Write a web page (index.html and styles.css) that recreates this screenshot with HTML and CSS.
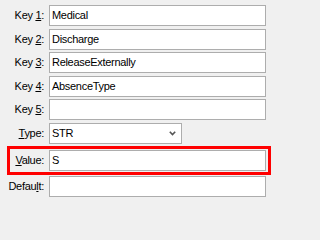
FILE: index.html
```html
<!DOCTYPE html>
<html>
<head>
<meta charset="utf-8">
<link rel="stylesheet" href="styles.css">
</head>
<body>
<div class="form">
  <div class="row"><label class="lbl">Key <u>1</u>:</label><div class="field">Medical</div></div>
  <div class="row"><label class="lbl">Key <u>2</u>:</label><div class="field">Discharge</div></div>
  <div class="row"><label class="lbl">Key <u>3</u>:</label><div class="field">ReleaseExternally</div></div>
  <div class="row"><label class="lbl">Key <u>4</u>:</label><div class="field">AbsenceType</div></div>
  <div class="row"><label class="lbl">Key <u>5</u>:</label><div class="field"></div></div>
  <div class="row"><label class="lbl"><u>T</u>ype:</label>
    <div class="select"><span>STR</span>
      <svg class="chev" width="7" height="5" viewBox="0 0 7 5"><path d="M0.8 0.8 L3.5 3.6 L6.2 0.8" fill="none" stroke="#555" stroke-width="1.6"/></svg>
    </div>
  </div>
  <div class="row highlight"><label class="lbl"><u>V</u>alue:</label><div class="field">S</div></div>
  <div class="row"><label class="lbl">Defau<u>l</u>t:</label><div class="field"></div></div>
</div>
</body>
</html>
```

FILE: styles.css
```css
html, body {
  margin: 0;
  padding: 0;
  background: #f0f0f0;
}
body {
  font-family: "Liberation Sans", Arial, sans-serif;
  font-size: 11px;
  letter-spacing: -0.3px;
  color: #000;
}
.form {
  box-sizing: border-box;
  width: 271px;
  display: flex;
  flex-direction: column;
  gap: 2.6px;
  padding: 5px 5px 0 0;
}
.row {
  display: grid;
  grid-template-columns: 44px 1fr;
  column-gap: 5px;
  height: 21px;
  align-items: stretch;
}
.lbl {
  display: block;
  text-align: right;
  line-height: 21px;
  white-space: nowrap;
}
.lbl u {
  text-underline-offset: 1px;
}
.field {
  box-sizing: border-box;
  height: 21px;
  background: #fff;
  border: 1px solid #adadad;
  padding: 0 2px;
  line-height: 19px;
  white-space: nowrap;
  overflow: hidden;
}
.select {
  box-sizing: border-box;
  width: 133px;
  height: 21px;
  background: #fff;
  border: 1px solid #adadad;
  padding: 0 5px 0 2px;
  display: flex;
  align-items: center;
  justify-content: space-between;
}
.chev {
  display: block;
  margin-top: 1px;
}
.highlight {
  height: 29px;
  box-sizing: border-box;
  border: 3px solid #ff0000;
  margin: -0.6px -5px -1.6px 7px;
  padding: 1px 2px 1px 0;
  grid-template-columns: 34px 1fr;
}
```
